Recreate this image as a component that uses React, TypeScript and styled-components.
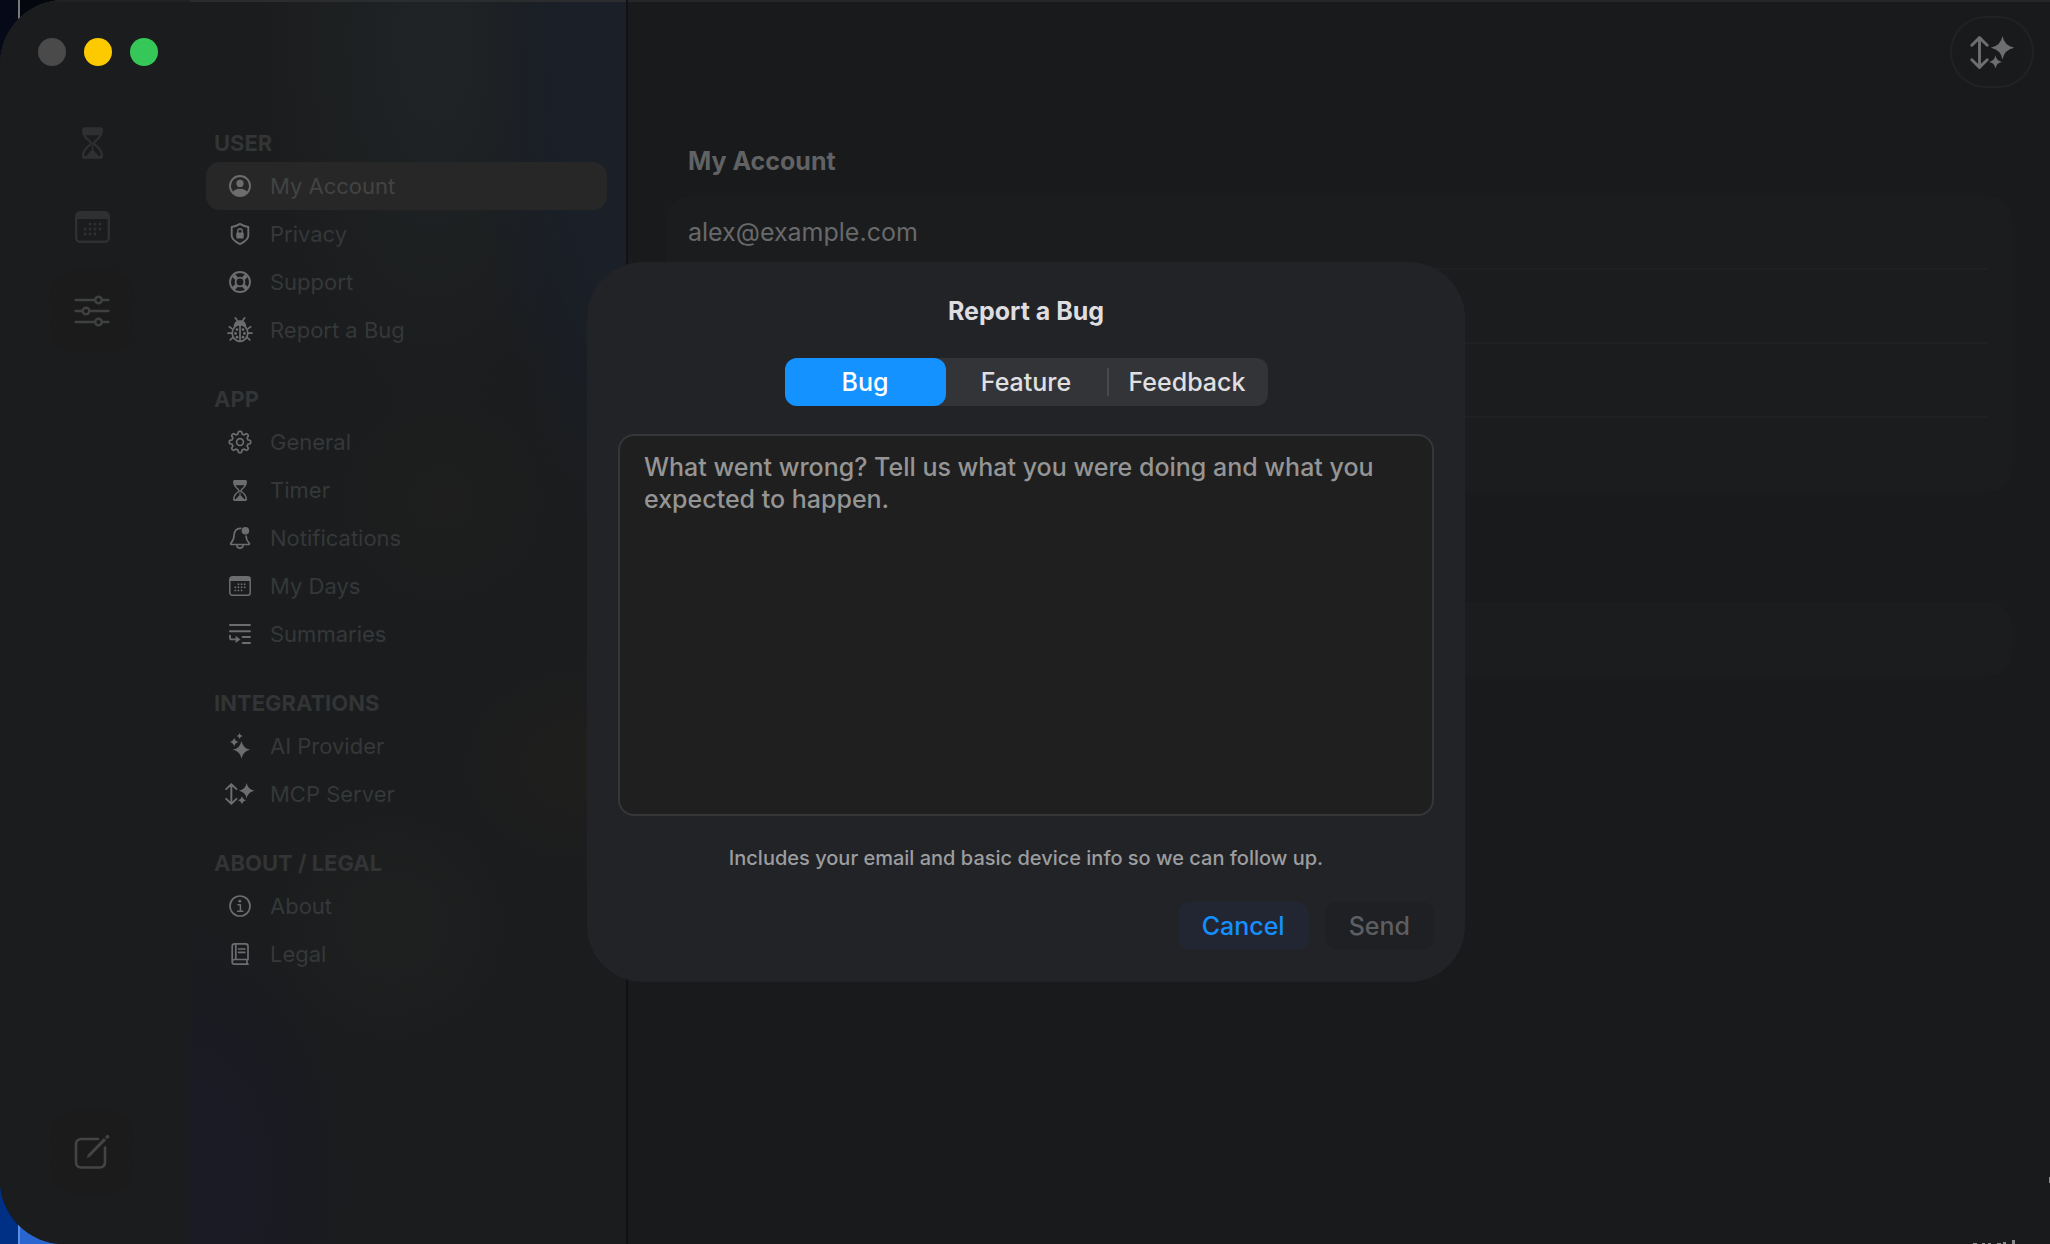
import React, { useState } from "react";
import styled, { createGlobalStyle, css } from "styled-components";

const GlobalStyle = createGlobalStyle`
  *, *::before, *::after { box-sizing: border-box; }
  html, body, #root { height: 100%; margin: 0; }
  body {
    background: #1b1a19;
    color: #dedee0;
    font-family: Inter, "Liberation Sans", sans-serif;
    font-size: 25px;
    line-height: 32px;
    overflow: hidden;
  }
  button, textarea, input { font: inherit; color: inherit; }
  button { border: 0; padding: 0; background: none; cursor: pointer; }
  h1, h2, p, ul { margin: 0; padding: 0; }
  ul { list-style: none; }
`;

/* ---------- desktop and window ---------- */

const Desktop = styled.div`
  min-height: 100vh;
  display: flex;
  background:
    linear-gradient(90deg, #002f86 0 18px, #5b8fe4 18px 20px, #2a66cf 20px) left bottom / 100px 50% no-repeat,
    linear-gradient(90deg, #060a18 0 18px, #77797c 18px 20px, #04070d 20px) left top / 100px 50% no-repeat,
    #1b1a19;
`;

const Window = styled.div`
  flex: 1;
  display: flex;
  overflow: hidden;
  border-radius: 64px 0 0 64px;
  background: #191a1b;
  box-shadow: inset 0 2px 0 #252627;
`;

const Rail = styled.nav`
  flex: 0 0 190px;
  display: flex;
  flex-direction: column;
  padding: 38px 16px 50px 38px;
  background: #1b1c1d;
  box-shadow: inset 0 2px 0 #212223;
`;

const Lights = styled.div`
  display: flex;
  gap: 18px;
  margin-bottom: 35px;
`;

const Light = styled.button<{ $color: string }>`
  width: 28px;
  height: 28px;
  flex: none;
  border-radius: 50%;
  background: ${(p) => p.$color};
`;

const RailButton = styled.button<{ $active?: boolean; $last?: boolean }>`
  display: grid;
  place-items: center;
  width: 84px;
  height: 84px;
  margin-left: 12px;
  border-radius: 28px;
  color: #2f3031;
  ${(p) =>
    p.$active &&
    css`
      color: #3f4040;
      background: #1b1b1b;
    `}
  ${(p) =>
    p.$last &&
    css`
      margin-top: auto;
      color: #434444;
      background: #1b1b1b;
    `}
`;

const Sidebar = styled.aside`
  flex: 0 0 438px;
  padding: 124px 19px 24px 16px;
  border-right: 2px solid #101112;
  background:
    linear-gradient(#2a2c2e, #2a2c2e) top / 100% 2px no-repeat,
    radial-gradient(150px 460px at 100% 90px, #1a1f28 45%, transparent),
    radial-gradient(180px 380px at 56% 40px, #1f2325 10%, transparent),
    radial-gradient(150px 150px at 58% 500px, #1d1e1d, transparent),
    radial-gradient(160px 130px at 90% 765px, #1e1e1d 20%, transparent),
    radial-gradient(130px 130px at 46% 925px, #1e2020 20%, transparent),
    radial-gradient(160px 260px at 0% 1180px, #1a1b25 30%, transparent),
    linear-gradient(#1b1c1d, #1b1c1e);
`;

const Section = styled.section`
  margin-bottom: 26px;
`;

const SectionTitle = styled.h2`
  padding-left: 8px;
  font-size: 22px;
  font-weight: 700;
  line-height: 38px;
  color: #323435;
`;

const NavItem = styled.button<{ $active?: boolean }>`
  display: flex;
  align-items: center;
  gap: 14px;
  width: 100%;
  height: 48px;
  padding-left: 18px;
  border-radius: 14px;
  text-align: left;
  font-size: 22px;
  line-height: 28px;
  color: ${(p) => (p.$active ? "#434343" : "#353839")};
  background: ${(p) => (p.$active ? "#272728" : "transparent")};
`;

const IconSlot = styled.span`
  display: grid;
  place-items: center;
  width: 32px;
  height: 32px;
  color: #6c6d6e;
`;

const Main = styled.main`
  flex: 1;
  min-width: 0;
`;

const Toolbar = styled.header`
  display: flex;
  justify-content: flex-end;
  padding: 16px 16px 0;
`;

const RoundButton = styled.button`
  display: grid;
  place-items: center;
  width: 84px;
  height: 72px;
  border: 2px solid #212223;
  border-radius: 36px;
  color: #6d6e70;
`;

const Content = styled.div`
  padding: 57px 38px;
`;

const PageTitle = styled.h1`
  margin: 0 0 19px 22px;
  font-size: 25px;
  line-height: 32px;
  font-weight: 700;
  color: #616264;
`;

const Card = styled.ul`
  margin-bottom: 110px;
  padding: 0 24px 0 22px;
  border-radius: 24px;
  background: #1b1c1d;
`;

const CardRow = styled.li`
  display: flex;
  align-items: center;
  height: 74px;
  color: #68696b;
  &:not(:last-child) {
    border-bottom: 2px solid #1f2021;
  }
`;

const DesktopMarks = styled.svg`
  position: fixed;
  right: 0;
  bottom: 0;
`;

/* ---------- dialog ---------- */

const Overlay = styled.div`
  position: fixed;
  inset: 0;
  display: grid;
  place-items: center;
  padding-left: 2px;
`;

const Dialog = styled.form`
  display: flex;
  flex-direction: column;
  width: 878px;
  max-width: 100%;
  padding: 33px 31px 32px;
  border-radius: 56px;
  background: #222327;
`;

const DialogTitle = styled.h2`
  text-align: center;
  font-size: 25px;
  line-height: 32px;
  font-weight: 700;
`;

const Segments = styled.div`
  display: flex;
  align-self: center;
  margin: 31px 0 28px;
  border-radius: 12px;
  background: #333438;
`;

const Segment = styled.label<{ $active: boolean; $divided: boolean }>`
  position: relative;
  display: grid;
  place-items: center;
  width: 161px;
  height: 48px;
  border-radius: 12px;
  font-weight: 500;
  color: ${(p) => (p.$active ? "#ffffff" : "#e0e0e2")};
  background: ${(p) => (p.$active ? "#1492ff" : "transparent")};
  cursor: pointer;
  ${(p) =>
    p.$divided &&
    css`
      &::before {
        content: "";
        position: absolute;
        left: 0;
        top: 10px;
        bottom: 10px;
        width: 2px;
        background: #48494d;
      }
    `}
  input {
    position: absolute;
    inset: 0;
    margin: 0;
    opacity: 0;
  }
`;

const Message = styled.textarea`
  display: block;
  width: 100%;
  height: 382px;
  padding: 15px 24px;
  border: 2px solid #353638;
  border-radius: 16px;
  outline: none;
  resize: none;
  background: #1f1f1f;
  font-weight: 500;
  line-height: 32px;
  &::placeholder {
    color: #959595;
    opacity: 1;
  }
`;

const Note = styled.p`
  margin: 28px 0 30px;
  text-align: center;
  font-size: 20px;
  font-weight: 500;
  line-height: 28px;
  color: #9c9d9f;
`;

const Actions = styled.div`
  display: flex;
  justify-content: flex-end;
  gap: 16px;
`;

const Action = styled.button<{ $primary?: boolean }>`
  height: 48px;
  padding: 0 24px;
  border-radius: 12px;
  font-weight: 500;
  color: ${(p) => (p.$primary ? "#148fff" : "#5d5e61")};
  background: ${(p) => (p.$primary ? "#222632" : "#1f2023")};
`;

/* ---------- icons ---------- */

type IconProps = { size?: number };

const Svg = ({ size = 22, children }: IconProps & { children: React.ReactNode }) => (
  <svg width={size} height={size} viewBox="0 0 24 24" fill="none" stroke="currentColor" strokeWidth="1.9" strokeLinecap="round" strokeLinejoin="round" aria-hidden="true">
    {children}
  </svg>
);

const PersonIcon = () => (
  <Svg size={24}>
    <circle cx="12" cy="12" r="10" />
    <circle cx="12" cy="9.4" r="3.6" fill="currentColor" stroke="none" />
    <path d="M4.6 18.2C6.4 15.6 9 14.8 12 14.8s5.6.8 7.4 3.4A10 10 0 0 1 12 22a10 10 0 0 1-7.4-3.8z" fill="currentColor" stroke="none" />
  </Svg>
);

const ShieldIcon = () => (
  <Svg size={24}>
    <path d="M12 1.9C14.5 3.6 17 4.4 20.3 5v8.5c0 4-4 6.5-8.3 8.6-4.3-2.1-8.3-4.6-8.3-8.6V5C7 4.4 9.5 3.6 12 1.9z" />
    <rect x="8.3" y="10.6" width="7.4" height="6" rx="1" fill="currentColor" stroke="none" />
    <path d="M9.8 11V8.9a2.2 2.2 0 0 1 4.4 0V11" strokeWidth="1.4" />
  </Svg>
);

const SupportIcon = () => (
  <Svg size={24}>
    <circle cx="12" cy="12" r="10" />
    <circle cx="12" cy="12" r="4.4" />
    <path d="M5.4 5.4l3.2 3.2M15.4 15.4l3.2 3.2M18.6 5.4l-3.2 3.2M8.6 15.4l-3.2 3.2" strokeWidth="4" strokeLinecap="butt" />
  </Svg>
);

const BugIcon = () => (
  <svg width={26} height={26} viewBox="0 0 26 26" fill="none" stroke="currentColor" strokeWidth="1.7" strokeLinecap="round" aria-hidden="true">
    <ellipse cx="13" cy="16" rx="7.8" ry="8.4" />
    <path d="M6.6 9.4C7 5.4 9.4 3.2 13 3.2s6 2.2 6.4 6.200c-3.600-1.600-9.200-1.600-12.800 0z" fill="currentColor" stroke="none" />
    <path d="M10.2 3.6L8.400 1M15.800 3.600L17.600 1M13 8v16M4.900 11.600L2.300 9.800M21.100 11.600l2.600-1.800M4.600 16.200H1M21.400 16.200H25M5.800 20.600l-2.600 2.300M20.200 20.600l2.600 2.300" />
    <g fill="currentColor" stroke="none">
      <circle cx="10" cy="12.600" r="1.400" />
      <circle cx="16" cy="12.600" r="1.400" />
      <circle cx="8.600" cy="16.400" r="1.400" />
      <circle cx="17.400" cy="16.400" r="1.400" />
      <circle cx="10" cy="20.200" r="1.400" />
      <circle cx="16" cy="20.200" r="1.400" />
    </g>
  </svg>
);

const gearPath = (() => {
  const steps = 128;
  const points: string[] = [];
  for (let i = 0; i < steps; i++) {
    const angle = (i / steps) * Math.PI * 2;
    const radius = 9.4 + 1.3 * Math.tanh(2.6 * Math.cos(8 * angle));
    points.push(`${(12 + radius * Math.sin(angle)).toFixed(2)} ${(12 - radius * Math.cos(angle)).toFixed(2)}`);
  }
  return `M${points.join("L")}Z`;
})();

const GearIcon = () => (
  <Svg size={24}>
    <path d={gearPath} strokeWidth="1.7" />
    <circle cx="12" cy="12" r="3.4" strokeWidth="1.7" />
  </Svg>
);

const HourglassIcon = ({ size = 22 }: IconProps) => (
  <svg width={Math.round((size * 2) / 3)} height={size} viewBox="0 0 16 24" fill="currentColor" fillRule="evenodd" aria-hidden="true">
    <path d="M2 0h12c1.300 0 2 .8 2 2 0 4.200-2.300 6.600-5.300 9-.6.500-.6 1.500 0 2 3 2.400 5.300 4.800 5.300 9 0 1.200-.7 2-2 2H2c-1.300 0-2-.8-2-2 0-4.200 2.300-6.600 5.300-9 .6-.5.600-1.500 0-2C2.300 8.600 0 6.200 0 2 0 .8.700 0 2 0zM2.800 6c.9 1.600 2.200 2.800 3.700 4 .9.800.9 3.200 0 4-2.600 2-4.300 4-4.700 6.800 0 1 .4 1.600 1.200 1.200l4.400-4.600V11.800L8 11l.6.800v5.600L13 22c.8.400 1.200-.2 1.200-1.200-.4-2.800-2.100-4.800-4.700-6.800-.9-.8-.9-3.200 0-4 1.500-1.200 2.800-2.400 3.700-4z" />
  </svg>
);

const BellIcon = () => (
  <Svg size={24}>
    <path d="M12.8 2.3C8.4 2 6.3 5.2 6.1 9c-.2 4.6-1 6-3.2 8.200-.5.600-.2 1.300.6 1.300h17c.8 0 1.100-.7.600-1.300-2-2-2.900-3.500-3.100-7.200" strokeWidth="1.7" />
    <path d="M8.800 19.500c.5 1.700 1.600 2.600 3.200 2.600s2.700-.9 3.200-2.600" strokeWidth="1.700" />
    <circle cx="17.400" cy="4.800" r="3.800" fill="currentColor" stroke="none" />
  </Svg>
);

const calendarDots = [
  [14, 10], [19, 10], [24, 10],
  [9, 15], [14, 15], [19, 15], [24, 15],
  [9, 20], [14, 20], [19, 20],
];

const CalendarIcon = ({ size = 22 }: IconProps) => (
  <svg width={size} height={Math.round(size * 0.92)} viewBox="0 0 35 32" fill="none" aria-hidden="true">
    <rect x="1.2" y="1.2" width="32.6" height="29.6" rx="4" stroke="currentColor" strokeWidth="2.4" />
    <path d="M1 8V5a4 4 0 0 1 4-4h25a4 4 0 0 1 4 4v3z" fill="currentColor" />
    {calendarDots.map(([x, y]) => (
      <circle key={`${x}-${y}`} cx={x + 1} cy={y + 3} r="1.5" fill="currentColor" />
    ))}
  </svg>
);

const SummaryIcon = () => (
  <Svg size={24}>
    <path d="M2 3h20M2 9.200h20M14.600 15h7.400M14.600 21h7.400" />
    <path d="M2 13.600v2.200c0 1 .6 1.600 1.600 1.600H8" />
    <path d="M7.600 13.800v7.200l4.800-3.600z" fill="currentColor" stroke="none" />
  </Svg>
);

const star = (cx: number, cy: number, r: number) => {
  const k = r * 0.16;
  return `M${cx} ${cy - r}Q${cx + k} ${cy - k} ${cx + r} ${cy}Q${cx + k} ${cy + k} ${cx} ${cy + r}Q${cx - k} ${cy + k} ${cx - r} ${cy}Q${cx - k} ${cy - k} ${cx} ${cy - r}Z`;
};

const SparklesIcon = () => (
  <svg width={26} height={26} viewBox="0 0 26 26" fill="currentColor" aria-hidden="true">
    <path d={star(14.5, 16.8, 8.8)} />
    <path d={star(7.2, 9, 4.6)} />
    <path d={star(12.6, 3, 3)} />
  </svg>
);

const ServerIcon = ({ size = 22 }: IconProps) => (
  <svg width={Math.round(size * 1.36)} height={size} viewBox="0 0 45 33" fill="currentColor" aria-hidden="true">
    <path d="M9.500 2v29M1.800 9.200L9.500 1.600l7.700 7.600M1.800 23.800l7.700 7.600 7.700-7.600" fill="none" stroke="currentColor" strokeWidth="2.900" strokeLinecap="round" strokeLinejoin="round" />
    <path d={star(32.5, 11.7, 11.7)} />
    <path d={star(25.5, 26, 6.4)} />
  </svg>
);

const InfoIcon = () => (
  <Svg size={24}>
    <circle cx="12" cy="12" r="10" strokeWidth="1.7" />
    <circle cx="11.8" cy="7.2" r="1.4" fill="currentColor" stroke="none" />
    <path d="M10 10.800h2.400v6.200M9.600 17.200h5.200" strokeWidth="1.5" />
  </Svg>
);

const BookIcon = () => (
  <Svg size={24}>
    <path d="M20 17.500H6.500a2.300 2.300 0 0 0 0 4.700H20M19 17.800v4.200M4.200 19.600V4.200C4.200 2.600 5 1.800 6.600 1.800h11c1.600 0 2.400.8 2.400 2.400v13.300M7.800 2v15.300M10.600 7h6.200M10.600 10.400h6.200" strokeWidth="1.7" />
  </Svg>
);

const SlidersIcon = () => (
  <svg width={36} height={32} viewBox="0 0 36 32" fill="none" stroke="currentColor" strokeWidth="2.4" strokeLinecap="round" aria-hidden="true">
    <path d="M1.500 5H21M28 5h6.500M1.500 16H8.500M15.500 16h19M1.500 27H21M28 27h6.500" />
    <circle cx="24.5" cy="5" r="3.3" />
    <circle cx="12" cy="16" r="3.3" />
    <circle cx="24.5" cy="27" r="3.3" />
  </svg>
);

const ComposeIcon = () => (
  <svg width={36} height={36} viewBox="0 0 36 36" fill="none" stroke="currentColor" strokeWidth="2.6" strokeLinecap="round" aria-hidden="true">
    <path d="M24 5H7.500C4 5 2 7 2 10.500V28c0 3.500 2 5.500 5.500 5.500h18c3.500 0 5.500-2 5.500-5.500V13.500" />
    <path d="M15 21.500L31 5.200" strokeWidth="3.2" strokeLinecap="butt" />
    <path d="M12.800 24l1-3.600 2.400 2.300z" fill="currentColor" stroke="none" />
    <path d="M33.200 3l.4-.4" strokeWidth="3.4" />
  </svg>
);

/* ---------- data ---------- */

const sections = [
  {
    title: "USER",
    items: [
      { label: "My Account", icon: <PersonIcon /> },
      { label: "Privacy", icon: <ShieldIcon /> },
      { label: "Support", icon: <SupportIcon /> },
      { label: "Report a Bug", icon: <BugIcon /> },
    ],
  },
  {
    title: "APP",
    items: [
      { label: "General", icon: <GearIcon /> },
      { label: "Timer", icon: <HourglassIcon size={21} /> },
      { label: "Notifications", icon: <BellIcon /> },
      { label: "My Days", icon: <CalendarIcon /> },
      { label: "Summaries", icon: <SummaryIcon /> },
    ],
  },
  {
    title: "INTEGRATIONS",
    items: [
      { label: "AI Provider", icon: <SparklesIcon /> },
      { label: "MCP Server", icon: <ServerIcon /> },
    ],
  },
  {
    title: "ABOUT / LEGAL",
    items: [
      { label: "About", icon: <InfoIcon /> },
      { label: "Legal", icon: <BookIcon /> },
    ],
  },
];

const kinds = ["Bug", "Feature", "Feedback"];

export default function App() {
  const [page, setPage] = useState("My Account");
  const [kind, setKind] = useState("Bug");
  const [message, setMessage] = useState("");
  const selected = kinds.indexOf(kind);

  return (
    <>
      <GlobalStyle />
      <Desktop>
        <Window>
          <Rail>
            <Lights>
              <Light type="button" $color="#4a4a4b" aria-label="Close" />
              <Light type="button" $color="#fdca00" aria-label="Minimize" />
              <Light type="button" $color="#35c859" aria-label="Zoom" />
            </Lights>
            <RailButton type="button" aria-label="Timer">
              <HourglassIcon size={32} />
            </RailButton>
            <RailButton type="button" aria-label="Days">
              <CalendarIcon size={35} />
            </RailButton>
            <RailButton type="button" aria-label="Settings" $active>
              <SlidersIcon />
            </RailButton>
            <RailButton type="button" aria-label="Compose" $last>
              <ComposeIcon />
            </RailButton>
          </Rail>

          <Sidebar>
            {sections.map((section) => (
              <Section key={section.title}>
                <SectionTitle>{section.title}</SectionTitle>
                {section.items.map((item) => (
                  <NavItem key={item.label} type="button" $active={item.label === page} onClick={() => setPage(item.label)}>
                    <IconSlot>{item.icon}</IconSlot>
                    {item.label}
                  </NavItem>
                ))}
              </Section>
            ))}
          </Sidebar>

          <Main>
            <Toolbar>
              <RoundButton type="button" aria-label="MCP Server">
                <ServerIcon size={33} />
              </RoundButton>
            </Toolbar>
            <Content>
              <PageTitle>My Account</PageTitle>
              <Card>
                <CardRow>alex@example.com</CardRow>
                <CardRow />
                <CardRow />
                <CardRow />
              </Card>
              <Card>
                <CardRow />
              </Card>
            </Content>
          </Main>
        </Window>
      </Desktop>

      <DesktopMarks width="80" height="70" viewBox="0 0 80 70" fill="#8b8c8d" aria-hidden="true">
        <path d="M3 69h4v1h-4zM12 69h3v1h-3zM18 69h3v1h-3zM27 69h4v1h-4zM33 68h3v2h-3zM42 66h3v4h-3zM79 3h1v6h-1z" />
      </DesktopMarks>

      <Overlay>
        <Dialog role="dialog" aria-labelledby="dialog-title" onSubmit={(e) => e.preventDefault()}>
          <DialogTitle id="dialog-title">Report a Bug</DialogTitle>
          <Segments role="radiogroup" aria-labelledby="dialog-title">
            {kinds.map((k, i) => (
              <Segment key={k} $active={k === kind} $divided={i > 0 && i !== selected && i - 1 !== selected}>
                <input type="radio" name="kind" value={k} checked={k === kind} onChange={() => setKind(k)} />
                {k}
              </Segment>
            ))}
          </Segments>
          <Message
            aria-label="Message"
            value={message}
            onChange={(e) => setMessage(e.target.value)}
            placeholder="What went wrong? Tell us what you were doing and what you expected to happen."
          />
          <Note>Includes your email and basic device info so we can follow up.</Note>
          <Actions>
            <Action type="button" $primary>
              Cancel
            </Action>
            <Action type="submit" disabled>
              Send
            </Action>
          </Actions>
        </Dialog>
      </Overlay>
    </>
  );
}
